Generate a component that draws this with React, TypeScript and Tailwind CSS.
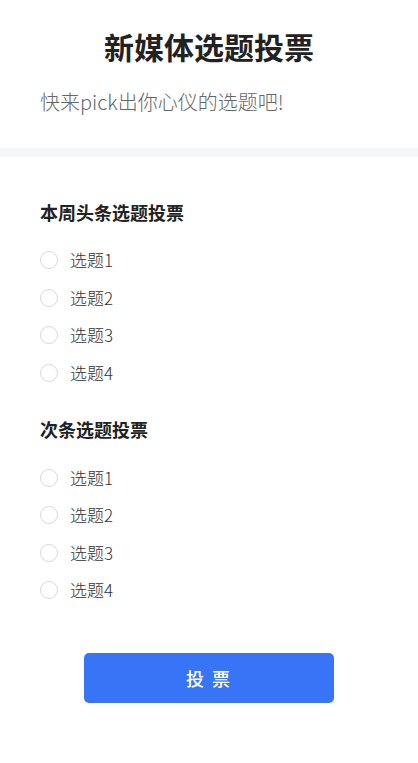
import React, { useState } from 'react';

const font = { fontFamily: '"Noto Sans CJK SC", "Noto Sans", sans-serif' };

interface Question {
  id: string;
  title: string;
  options: string[];
}

const questions: Question[] = [
  { id: 'q1', title: '本周头条选题投票', options: ['选题1', '选题2', '选题3', '选题4'] },
  { id: 'q2', title: '次条选题投票', options: ['选题1', '选题2', '选题3', '选题4'] },
];

const Radio: React.FC<{ checked: boolean }> = ({ checked }) => (
  <span
    className={`flex h-[18px] w-[18px] shrink-0 items-center justify-center rounded-full border ${
      checked ? 'border-[#3875f6]' : 'border-[#d9d9d9]'
    } bg-white`}
  >
    {checked && <span className="h-[8px] w-[8px] rounded-full bg-[#3875f6]" />}
  </span>
);

export default function App() {
  const [answers, setAnswers] = useState<Record<string, number>>({});

  return (
    <div className="min-h-[763px] bg-white text-[#333]" style={font}>
      <div className="px-10 pt-[26px] pb-[32px]">
        <h1 className="text-center text-[30px] font-bold leading-[40px] text-[#222]">新媒体选题投票</h1>
        <p className="mt-[22px] text-[20px] leading-[28px] text-[#666] font-light">快来pick出你心仪的选题吧!</p>
      </div>
      <div className="h-[9px] bg-[#f5f6f8]" />
      <div className="px-10 pt-[43px]">
        {questions.map((q, qi) => (
          <div key={q.id} className={qi > 0 ? 'mt-[32px]' : ''}>
            <h2 className="text-[18px] font-bold leading-[24px] text-[#222]">{q.title}</h2>
            <div className={`${qi > 0 ? 'mt-[25px]' : 'mt-[24px]'} flex flex-col gap-[13.5px]`}>
              {q.options.map((opt, oi) => (
                <label
                  key={oi}
                  className="flex h-[24px] cursor-pointer items-center gap-3"
                  onClick={() => setAnswers(prev => ({ ...prev, [q.id]: oi }))}
                >
                  <Radio checked={answers[q.id] === oi} />
                  <span className="text-[17px] font-light text-[#333]">{opt}</span>
                </label>
              ))}
            </div>
          </div>
        ))}
        <div className="flex justify-center pt-[51px]">
          <button className="h-[50px] w-[250px] rounded-[5px] bg-[#3875f6] text-[18px] font-medium tracking-[2px] text-white">
            投 票
          </button>
        </div>
      </div>
    </div>
  );
}
